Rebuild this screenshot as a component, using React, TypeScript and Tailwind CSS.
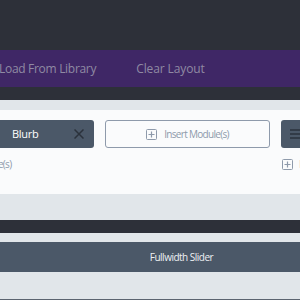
import React from "react";

function PlusBox({ className = "" }: { className?: string }) {
  return (
    <svg width="11" height="11" viewBox="0 0 11 11" className={className}>
      <rect x="0.5" y="0.5" width="10" height="10" rx="1" fill="none" stroke="currentColor" />
      <path d="M5.5 2.5v6M2.5 5.5h6" stroke="currentColor" strokeWidth="1.2" />
    </svg>
  );
}

function InsertLink() {
  return (
    <div className="mt-[9px] flex items-center gap-[6px] pl-[1px] text-[#8e9aab]">
      <PlusBox />
      <span className="text-[10px] tracking-[-0.7px]">Insert Module(s)</span>
    </div>
  );
}

export default function App() {
  return (
    <div className="w-[300px] h-[300px] overflow-hidden bg-[#e1e6ea] font-['Open_Sans',sans-serif]">
      <div className="h-[50px] bg-[#2d3039]" />

      {/* Toolbar */}
      <div className="h-[37px] bg-[#3f2766] flex items-center gap-[40px] -ml-[1px]">
        <span className="text-[12px] tracking-[-0.3px] text-[#8f8aa3]">Load From Library</span>
        <span className="text-[12px] tracking-[-0.1px] text-[#8f8aa3]">Clear Layout</span>
      </div>
      <div className="h-[13px] bg-[#2d3039]" />

      {/* Row */}
      <div className="pt-[10px]">
        <div className="h-[84px] bg-[#fafbfc] pt-[10px] flex gap-[11px] -ml-[71px]">
          <div className="w-[165px] shrink-0 flex flex-col">
            <div className="h-[28px] bg-[#4b5868] rounded-[3px] flex items-center justify-between pl-[83px] pr-[10px]">
              <span className="text-[11px] tracking-[-0.3px] text-white">Blurb</span>
              <svg width="10" height="10" viewBox="0 0 10 10">
                <path d="M0.5 0.5l9 9M9.5 0.5l-9 9" stroke="#2b323c" strokeWidth="1.5" />
              </svg>
            </div>
            <InsertLink />
          </div>

          <div className="w-[165px] h-[28px] shrink-0 border border-[#8e9aab] rounded-[3px] flex items-center justify-center gap-[7px] text-[#8e9aab]">
            <PlusBox />
            <span className="text-[10px] tracking-[-0.7px]">Insert Module(s)</span>
          </div>

          <div className="w-[165px] shrink-0 flex flex-col">
            <div className="h-[28px] bg-[#4b5868] rounded-[3px] flex items-center pl-[9px]">
              <svg width="14" height="10" viewBox="0 0 14 10">
                <path d="M0 1h14M0 5h14M0 9h14" stroke="#2b323c" strokeWidth="1.6" />
              </svg>
            </div>
            <InsertLink />
          </div>
        </div>
      </div>

      <div className="h-[26px]" />
      <div className="h-[13px] bg-[#2d3039]" />
      <div className="h-[9px]" />
      <div className="h-[30px] bg-[#4b5868] flex items-center justify-center pl-[63px]">
        <span className="text-[10px] tracking-[-0.5px] text-[#eef0f3]">Fullwidth Slider</span>
      </div>
      <div className="h-[27px]" />
      <div className="h-[1px] bg-[#5b6470]" />
    </div>
  );
}
